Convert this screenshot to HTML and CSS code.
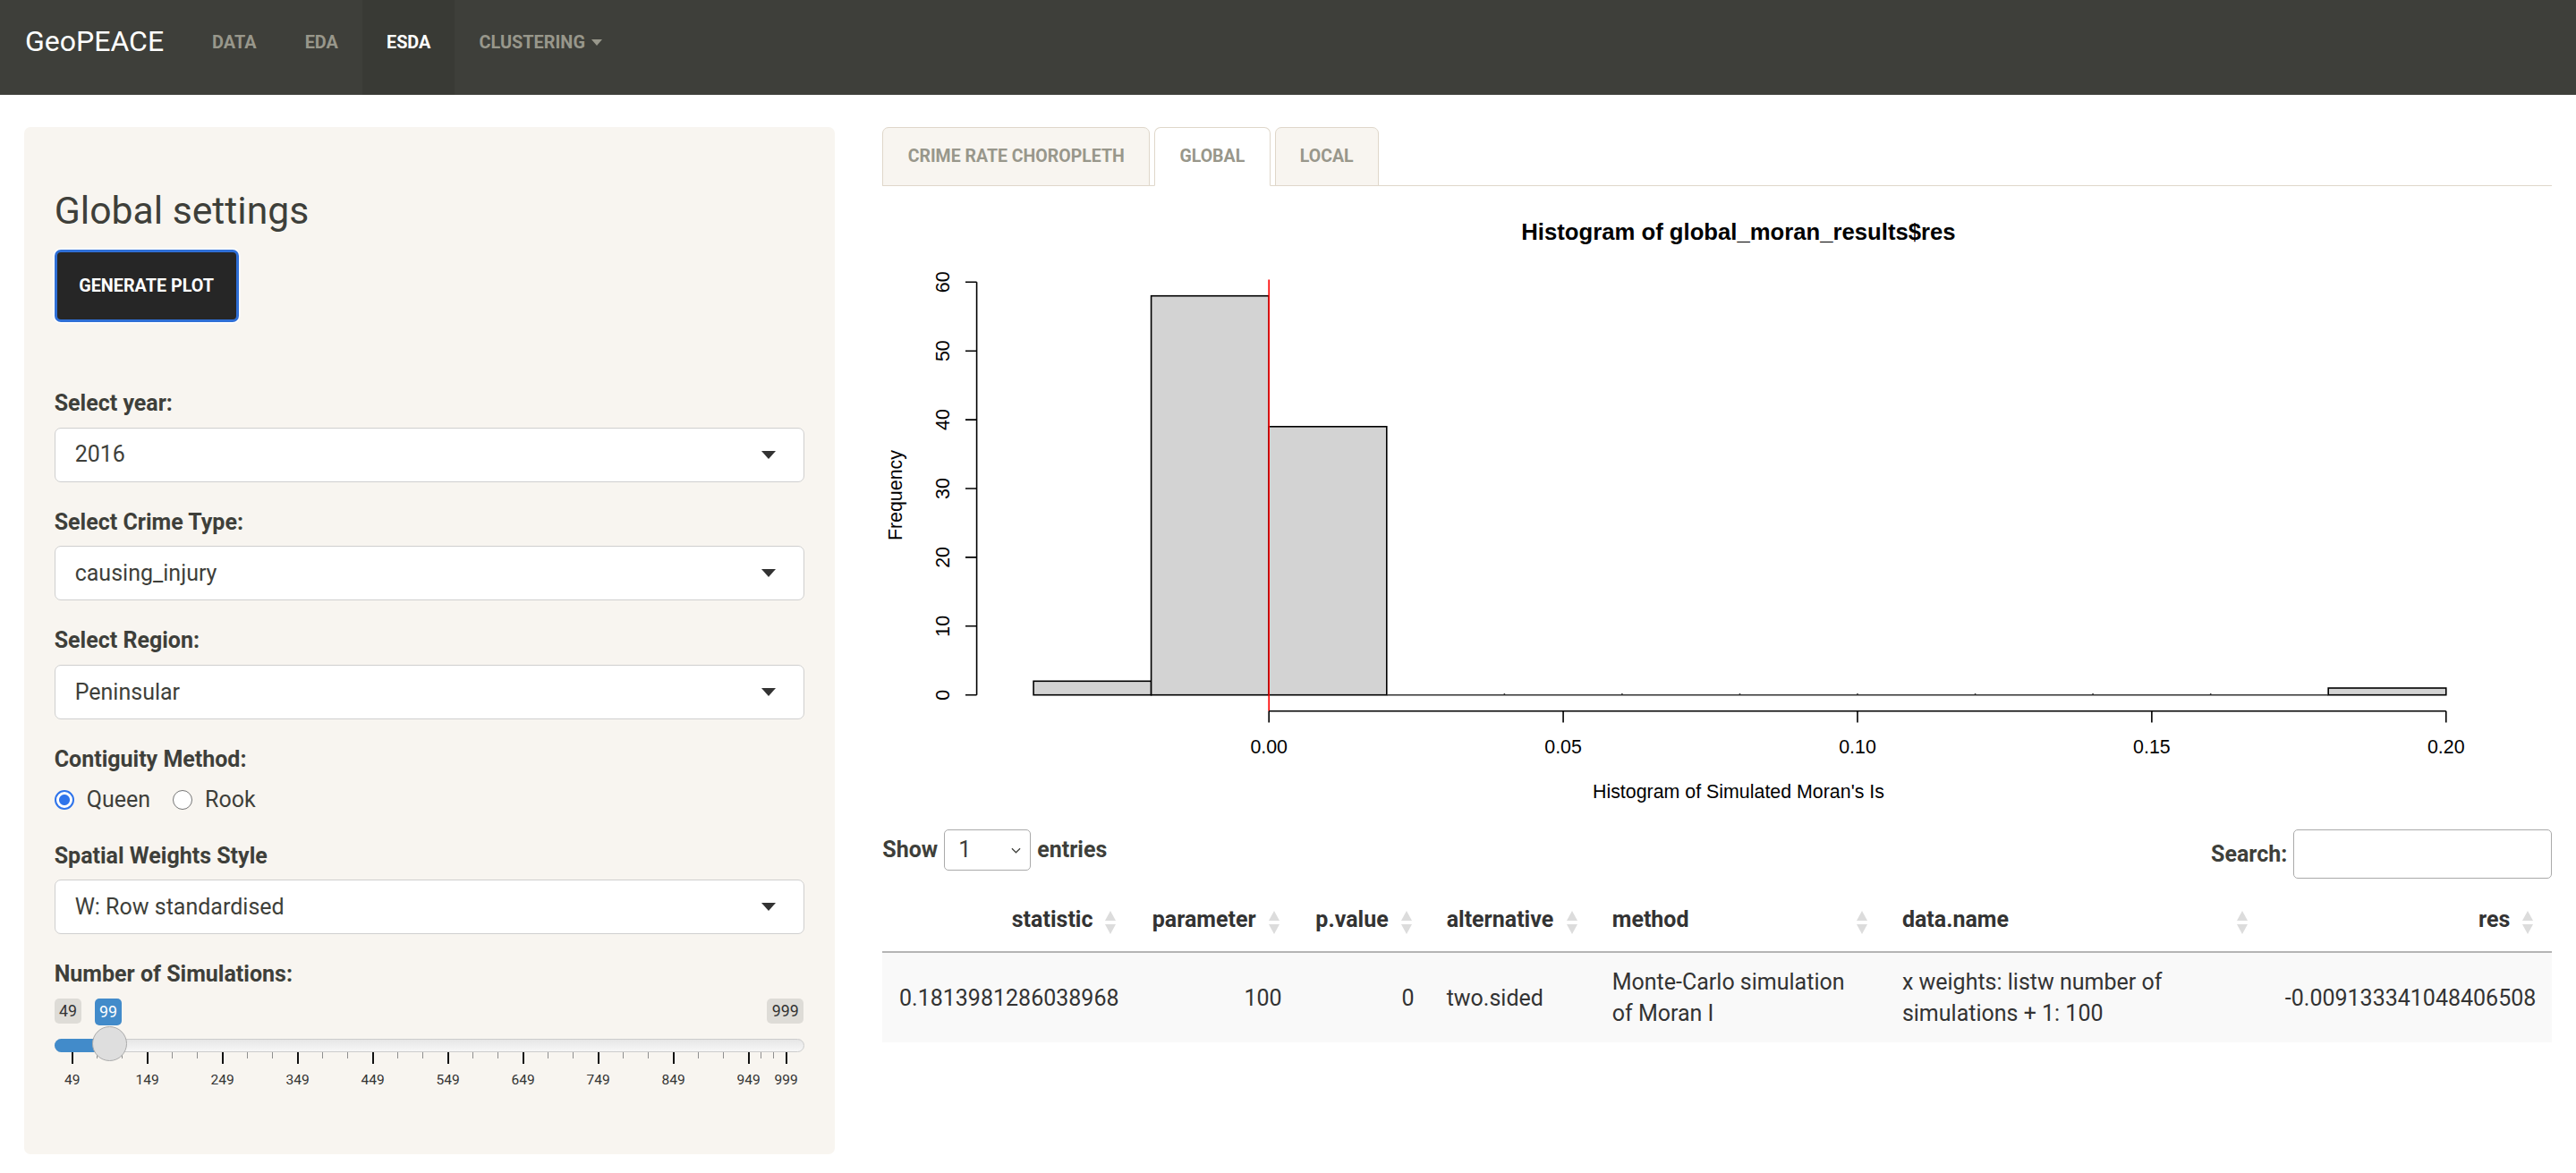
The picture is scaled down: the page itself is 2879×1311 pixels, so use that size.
FILE: index.html
```html
<!DOCTYPE html>
<html lang="en">
<head>
<meta charset="utf-8">
<title>GeoPEACE</title>
<link rel="stylesheet" href="styles.css">
</head>
<body>
<nav class="navbar">
  <span class="brand">GeoPEACE</span>
  <ul class="nav">
    <li class="nav-item"><a class="nav-link">Data</a></li>
    <li class="nav-item"><a class="nav-link">EDA</a></li>
    <li class="nav-item active"><a class="nav-link">ESDA</a></li>
    <li class="nav-item"><a class="nav-link">Clustering <span class="caret"></span></a></li>
  </ul>
</nav>

<div class="layout">
  <aside class="sidebar">
    <div class="well">
      <h3 class="well-title">Global settings</h3>
      <button class="btn">Generate Plot</button>

      <div class="form-group">
        <label class="control-label">Select year:</label>
        <div class="select"><span>2016</span><span class="select-caret"></span></div>
      </div>

      <div class="form-group">
        <label class="control-label">Select Crime Type:</label>
        <div class="select"><span>causing_injury</span><span class="select-caret"></span></div>
      </div>

      <div class="form-group">
        <label class="control-label">Select Region:</label>
        <div class="select"><span>Peninsular</span><span class="select-caret"></span></div>
      </div>

      <div class="form-group">
        <label class="control-label">Contiguity Method:</label>
        <div class="radio-group">
          <label class="radio"><input type="radio" name="cont" checked><span>Queen</span></label>
          <label class="radio"><input type="radio" name="cont"><span>Rook</span></label>
        </div>
      </div>

      <div class="form-group">
        <label class="control-label">Spatial Weights Style</label>
        <div class="select"><span>W: Row standardised</span><span class="select-caret"></span></div>
      </div>

      <div class="form-group">
        <label class="control-label">Number of Simulations:</label>
        <div class="irs">
          <span class="irs-label irs-min">49</span>
          <span class="irs-label irs-max">999</span>
          <span class="irs-line"></span>
          <span class="irs-bar" style="width:62px"></span>
          <span class="irs-tick" style="left:19px"></span>
          <span class="irs-tick minor" style="left:47px"></span>
          <span class="irs-tick minor" style="left:75px"></span>
          <span class="irs-tick" style="left:103px"></span>
          <span class="irs-tick minor" style="left:131px"></span>
          <span class="irs-tick minor" style="left:159px"></span>
          <span class="irs-tick" style="left:187px"></span>
          <span class="irs-tick minor" style="left:215px"></span>
          <span class="irs-tick minor" style="left:243px"></span>
          <span class="irs-tick" style="left:271px"></span>
          <span class="irs-tick minor" style="left:299px"></span>
          <span class="irs-tick minor" style="left:327px"></span>
          <span class="irs-tick" style="left:355px"></span>
          <span class="irs-tick minor" style="left:383px"></span>
          <span class="irs-tick minor" style="left:411px"></span>
          <span class="irs-tick" style="left:439px"></span>
          <span class="irs-tick minor" style="left:467px"></span>
          <span class="irs-tick minor" style="left:495px"></span>
          <span class="irs-tick" style="left:523px"></span>
          <span class="irs-tick minor" style="left:551px"></span>
          <span class="irs-tick minor" style="left:579px"></span>
          <span class="irs-tick" style="left:607px"></span>
          <span class="irs-tick minor" style="left:635px"></span>
          <span class="irs-tick minor" style="left:663px"></span>
          <span class="irs-tick" style="left:691px"></span>
          <span class="irs-tick minor" style="left:719px"></span>
          <span class="irs-tick minor" style="left:747px"></span>
          <span class="irs-tick" style="left:775px"></span>
          <span class="irs-tick minor" style="left:789px"></span>
          <span class="irs-tick minor" style="left:803px"></span>
          <span class="irs-tick" style="left:817px"></span>
          <span class="irs-num" style="left:20px">49</span>
          <span class="irs-num" style="left:104px">149</span>
          <span class="irs-num" style="left:188px">249</span>
          <span class="irs-num" style="left:272px">349</span>
          <span class="irs-num" style="left:356px">449</span>
          <span class="irs-num" style="left:440px">549</span>
          <span class="irs-num" style="left:524px">649</span>
          <span class="irs-num" style="left:608px">749</span>
          <span class="irs-num" style="left:692px">849</span>
          <span class="irs-num" style="left:776px">949</span>
          <span class="irs-num" style="left:818px">999</span>
          <span class="irs-handle" style="left:42.5px"></span>
          <span class="irs-label irs-single" style="left:45px">99</span>
        </div>
      </div>
    </div>
  </aside>

  <main class="main">
    <ul class="tabs">
      <li class="tab">Crime Rate Choropleth</li>
      <li class="tab active">Global</li>
      <li class="tab">Local</li>
    </ul>

    <svg class="plot" viewBox="0 0 1866 712" preserveAspectRatio="none" xmlns="http://www.w3.org/2000/svg">
      <text class="p-title" x="957" y="60" text-anchor="middle">Histogram of global_moran_results$res</text>
      <g class="p-bars">
        <rect x="169.1" y="553.3" width="131.5" height="15.4"/>
        <rect x="300.6" y="122.7" width="131.6" height="446"/>
        <rect x="432.2" y="268.8" width="131.6" height="299.9"/>
        <rect x="1616.2" y="561" width="131.6" height="7.7"/>
      </g>
      <path class="p-line p-zero" d="M563.8 568.7H1616.2M695.4 567V568.7M826.9 567V568.7M958.5 567V568.7M1090 567V568.7M1221.6 567V568.7M1353.1 567V568.7M1484.7 567V568.7"/>
      <line class="p-red" x1="432.2" y1="104.5" x2="432.2" y2="586.7"/>
      <path class="p-line" d="M105.6 107.3V568.7M93 568.7H105.6M93 491.8H105.6M93 414.9H105.6M93 338H105.6M93 261.1H105.6M93 184.2H105.6M93 107.3H105.6"/>
      <g class="p-tick">
        <text transform="translate(75 568.7) rotate(-90)" text-anchor="middle">0</text>
        <text transform="translate(75 491.8) rotate(-90)" text-anchor="middle">10</text>
        <text transform="translate(75 414.9) rotate(-90)" text-anchor="middle">20</text>
        <text transform="translate(75 338) rotate(-90)" text-anchor="middle">30</text>
        <text transform="translate(75 261.1) rotate(-90)" text-anchor="middle">40</text>
        <text transform="translate(75 184.2) rotate(-90)" text-anchor="middle">50</text>
        <text transform="translate(75 107.3) rotate(-90)" text-anchor="middle">60</text>
      </g>
      <path class="p-line" d="M432.2 586.7H1747.8M432.2 586.7V599.4M761.1 586.7V599.4M1090 586.7V599.4M1418.9 586.7V599.4M1747.8 586.7V599.4"/>
      <g class="p-tick">
        <text x="432.2" y="633.8" text-anchor="middle">0.00</text>
        <text x="761.1" y="633.8" text-anchor="middle">0.05</text>
        <text x="1090" y="633.8" text-anchor="middle">0.10</text>
        <text x="1418.9" y="633.8" text-anchor="middle">0.15</text>
        <text x="1747.8" y="633.8" text-anchor="middle">0.20</text>
      </g>
      <text class="p-axis" x="957" y="684.5" text-anchor="middle">Histogram of Simulated Moran's Is</text>
      <text class="p-axis" transform="translate(22 345.6) rotate(-90)" text-anchor="middle">Frequency</text>
    </svg>

    <div class="dt-top">
      <div class="dt-length">
        <span>Show</span>
        <span class="dt-select"><span>1</span>
          <svg class="chev" viewBox="0 0 12 7" xmlns="http://www.w3.org/2000/svg"><path d="M1 1L6 6L11 1" fill="none" stroke="#3e3f3a" stroke-width="1.3"/></svg>
        </span>
        <span>entries</span>
      </div>
      <div class="dt-search">
        <span>Search:</span>
        <span class="dt-input"></span>
      </div>
    </div>

    <table class="dt">
      <colgroup>
        <col class="c-stat"><col class="c-param"><col class="c-p"><col class="c-alt"><col class="c-method"><col class="c-data"><col class="c-res">
      </colgroup>
      <thead>
        <tr>
          <th class="num">statistic<span class="sort"></span></th>
          <th class="num">parameter<span class="sort"></span></th>
          <th class="num">p.value<span class="sort"></span></th>
          <th>alternative<span class="sort"></span></th>
          <th>method<span class="sort"></span></th>
          <th>data.name<span class="sort"></span></th>
          <th class="num">res<span class="sort"></span></th>
        </tr>
      </thead>
      <tbody>
        <tr>
          <td class="num">0.1813981286038968</td>
          <td class="num">100</td>
          <td class="num">0</td>
          <td>two.sided</td>
          <td>Monte-Carlo simulation of Moran I</td>
          <td>x weights: listw number of simulations + 1: 100</td>
          <td class="num">-0.009133341048406508</td>
        </tr>
      </tbody>
    </table>
  </main>
</div>
</body>
</html>
```

FILE: styles.css
```css
* { box-sizing: border-box; }
html, body { margin: 0; padding: 0; }
body {
  font-family: Roboto, "Liberation Sans", sans-serif;
  font-size: 25px;
  line-height: 1.42857;
  color: #3e3f3a;
  background: #fff;
}

/* navbar */
.navbar { display: flex; height: 106px; background: #3e3f3a; }
.brand { padding: 28px 27px 0 28px; font-size: 32px; line-height: 37px; color: #fff; }
.nav { display: flex; list-style: none; margin: 0; padding: 0; }
.nav-item { display: flex; }
.nav-link {
  display: block; height: 106px; padding: 30px 27px 0;
  line-height: 36px; font-size: 19.9px; font-weight: 700;
  text-transform: uppercase; color: #98978b;
}
.nav-item.active .nav-link { background: #393a35; color: #fff; }
.caret {
  display: inline-block; vertical-align: middle; margin-left: 2px; margin-top: -3px;
  width: 0; height: 0;
  border-left: 6.5px solid transparent; border-right: 6.5px solid transparent;
  border-top: 7px solid #98978b;
}

/* layout */
.layout { display: grid; grid-template-columns: 1fr 2fr; margin-top: 36px; }
.sidebar, .main { padding: 0 26.7px; min-width: 0; }

.well { background: #f8f5f0; border-radius: 7px; padding: 34px 34px 41px; margin-bottom: 20px; }
.well-title { font-size: 42.7px; font-weight: 400; line-height: 1.1; margin: 35.6px 0 20.5px; color: #3e3f3a; }

.btn {
  display: block; width: 206px; height: 81px; padding: 0; margin: 0 0 73px;
  background: #262626; color: #fff;
  border: 3px solid #2f6fd6; border-radius: 7px; box-shadow: 0 0 0 1.5px #fff;
  font-family: inherit; font-size: 19.8px; font-weight: 700; text-transform: uppercase;
}

.form-group { margin-bottom: 27px; }
.control-label { display: block; font-weight: 700; line-height: 35.7px; margin-bottom: 9px; }

.select {
  display: flex; align-items: center; justify-content: space-between;
  height: 61px; padding: 0 31px 0 22px;
  background: #fff; border: 1px solid #cfcfcf; border-radius: 7px;
}
.select-caret {
  width: 0; height: 0;
  border-left: 8.5px solid transparent; border-right: 8.5px solid transparent;
  border-top: 9px solid #333;
}

.radio-group { display: flex; align-items: center; gap: 25px; height: 35.7px; }
.radio { display: flex; align-items: center; gap: 14px; }
.radio input {
  appearance: none; -webkit-appearance: none; margin: 0;
  width: 22px; height: 22px; border-radius: 50%;
  border: 1.5px solid #767676; background: #fff;
}
.radio input:checked {
  border: 2px solid #2f74eb;
  background: radial-gradient(circle, #2f74eb 0 5.5px, #fff 6.5px);
}

/* slider */
.irs { position: relative; height: 106px; }
.irs-label {
  position: absolute; top: 0; height: 28px; padding: 0 5.3px;
  line-height: 28px; font-size: 17.8px; color: #333;
  background: rgba(0, 0, 0, 0.1); border-radius: 5px; z-index: 3;
}
.irs-min { left: 0; }
.irs-max { right: 1px; }
.irs-single { height: 30px; line-height: 30px; background: #428bca; color: #fff; }
.irs-line {
  position: absolute; left: 0; right: 0; top: 45px; height: 15px;
  border: 1px solid #cccccc; border-radius: 16px;
  background: linear-gradient(#dedede -50%, #ffffff 150%);
}
.irs-bar {
  position: absolute; left: 0; top: 45px; height: 15px;
  background: #428bca; border-radius: 16px 0 0 16px;
}
.irs-tick { position: absolute; top: 60px; width: 2px; height: 13px; background: #111; }
.irs-tick.minor { width: 1.5px; height: 7px; background: #8f8f8f; }
.irs-num {
  position: absolute; top: 81px; line-height: 20px; font-size: 15.5px; color: #333;
  transform: translateX(-50%);
}
.irs-handle {
  position: absolute; top: 31px; width: 39px; height: 39px; border-radius: 50%;
  background: #dedede; border: 1px solid #ababab; z-index: 2;
}

/* tabs */
.tabs {
  display: flex; gap: 5px; list-style: none; margin: 0; padding: 0;
  border-bottom: 1px solid #dfd7ca;
}
.tab {
  display: flex; align-items: center; height: 66px; margin-bottom: -1px; padding: 0 27.3px;
  background: #f8f5f0; border: 1px solid #dfd7ca; border-radius: 7px 7px 0 0;
  font-size: 19.5px; font-weight: 700; text-transform: uppercase; color: #98978b;
}
.tab.active { background: #fff; border-bottom-color: #fff; }

/* plot */
.plot { display: block; width: 100%; height: 712px; }
.p-title { font-family: "Liberation Sans", Arial, sans-serif; font-weight: 700; font-size: 25.7px; fill: #000; }
.p-axis, .p-tick text { font-family: "Liberation Sans", Arial, sans-serif; font-size: 21.4px; fill: #000; }
.p-bars rect { fill: #d3d3d3; stroke: #000; stroke-width: 1.6; }
.p-line { fill: none; stroke: #000; stroke-width: 1.6; }
.p-zero { stroke: #333; }
.p-red { stroke: #ff0000; stroke-width: 1.6; }

/* datatable */
.dt-top {
  display: flex; justify-content: space-between; align-items: flex-start;
  padding-top: 7px; margin-bottom: 14px;
}
.dt-length { display: flex; align-items: center; gap: 7px; height: 46px; font-weight: 700; }
.dt-select {
  display: flex; align-items: center; justify-content: space-between;
  width: 97px; height: 46px; padding: 0 10px 0 15px;
  border: 1px solid #aaa; border-radius: 5px; background: #fff; font-weight: 400;
}
.chev { width: 11px; height: 7px; }
.dt-search { display: flex; align-items: center; gap: 7px; font-weight: 700; }
.dt-input { display: block; width: 289px; height: 55px; border: 1px solid #aaa; border-radius: 5px; background: #fff; }

.dt { width: 100%; border-collapse: collapse; table-layout: fixed; }
.c-stat { width: 282px; }
.c-param { width: 182px; }
.c-p { width: 148px; }
.c-alt { width: 185px; }
.c-method { width: 324px; }
.c-data { width: 425px; }
.c-res { width: 319px; }
.dt th {
  position: relative; padding: 14px 47px 17px 18px; line-height: 36px;
  font-weight: 700; text-align: left; border-bottom: 2px solid #b5b5b5; color: #333;
}
.dt th.num { text-align: right; }
.dt td { padding: 15px 18px; line-height: 35px; vertical-align: middle; color: #333; }
.dt td.num { text-align: right; }
.dt tbody tr { background: #f9f9f9; }
.sort { position: absolute; right: 20px; top: 50%; margin-top: -12px; width: 13px; height: 26px; }
.sort::before, .sort::after {
  content: ""; position: absolute; left: 0; width: 0; height: 0;
  border-left: 6.5px solid transparent; border-right: 6.5px solid transparent;
}
.sort::before { top: 0; border-bottom: 11px solid #dcdcdc; }
.sort::after { bottom: 0; border-top: 11px solid #dcdcdc; }
```
